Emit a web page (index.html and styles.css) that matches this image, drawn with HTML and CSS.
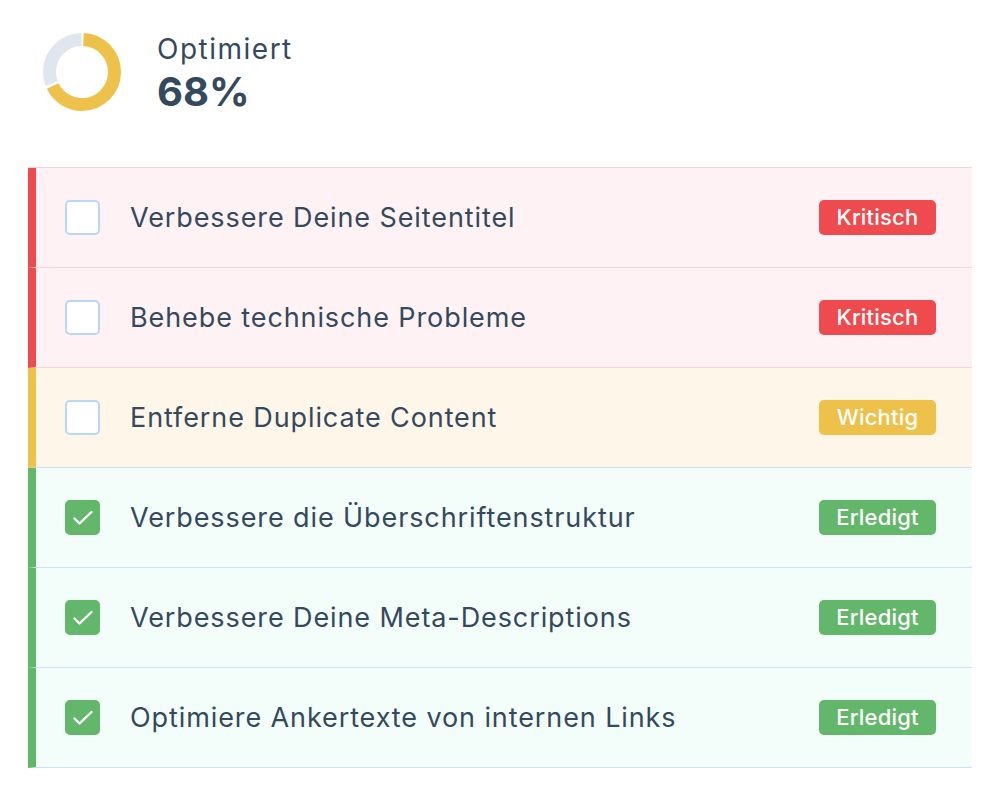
FILE: index.html
```html
<!DOCTYPE html>
<html lang="de">
<head>
<meta charset="utf-8">
<link rel="stylesheet" href="styles.css">
</head>
<body>
<div class="page">
  <header class="summary">
    <svg class="donut" width="78" height="78" viewBox="0 0 78 78">
      <circle cx="39" cy="39" r="32.5" fill="none" stroke="#dfe6ee" stroke-width="13"
        stroke-dasharray="62.3 141.9" stroke-dashoffset="-141" transform="rotate(-90 39 39)"/>
      <circle cx="39" cy="39" r="32.5" fill="none" stroke="#eec14a" stroke-width="13"
        stroke-dasharray="136.9 67.3" stroke-dashoffset="-1.5" transform="rotate(-90 39 39)"/>
    </svg>
    <div class="summary-text">
      <div class="summary-label">Optimiert</div>
      <div class="summary-value">68%</div>
    </div>
  </header>
  <ul class="tasks">
    <li class="task task-critical">
      <span class="check"></span>
      <span class="task-title">Verbessere Deine Seitentitel</span>
      <span class="badge badge-critical">Kritisch</span>
    </li>
    <li class="task task-critical">
      <span class="check"></span>
      <span class="task-title">Behebe technische Probleme</span>
      <span class="badge badge-critical">Kritisch</span>
    </li>
    <li class="task task-important">
      <span class="check"></span>
      <span class="task-title">Entferne Duplicate Content</span>
      <span class="badge badge-important">Wichtig</span>
    </li>
    <li class="task task-done">
      <span class="check check-on"><svg width="22" height="16" viewBox="0 0 22 16"><path d="M2.5 8.5l5 5L19.5 2" fill="none" stroke="#fff" stroke-width="2.4" stroke-linecap="round" stroke-linejoin="round"/></svg></span>
      <span class="task-title">Verbessere die Überschriftenstruktur</span>
      <span class="badge badge-done">Erledigt</span>
    </li>
    <li class="task task-done">
      <span class="check check-on"><svg width="22" height="16" viewBox="0 0 22 16"><path d="M2.5 8.5l5 5L19.5 2" fill="none" stroke="#fff" stroke-width="2.4" stroke-linecap="round" stroke-linejoin="round"/></svg></span>
      <span class="task-title">Verbessere Deine Meta-Descriptions</span>
      <span class="badge badge-done">Erledigt</span>
    </li>
    <li class="task task-done">
      <span class="check check-on"><svg width="22" height="16" viewBox="0 0 22 16"><path d="M2.5 8.5l5 5L19.5 2" fill="none" stroke="#fff" stroke-width="2.4" stroke-linecap="round" stroke-linejoin="round"/></svg></span>
      <span class="task-title">Optimiere Ankertexte von internen Links</span>
      <span class="badge badge-done">Erledigt</span>
    </li>
  </ul>
</div>
</body>
</html>
```

FILE: styles.css
```css
* { box-sizing: border-box; }
html, body { margin: 0; padding: 0; background: #fff; }
body {
  font-family: Inter, "Noto Sans", sans-serif;
  color: #34495e;
}
.page { padding: 32px 29px 0 28px; }
.summary {
  display: flex;
  align-items: flex-start;
  gap: 36px;
  padding-left: 15px;
}
.donut { display: block; flex: none; margin-top: 1px; }
.summary-text { display: flex; flex-direction: column; }
.summary-label { font-size: 28px; line-height: 34px; font-weight: 400; letter-spacing: 1.5px; color: #34495e; }
.summary-value { font-size: 40px; line-height: 48px; font-weight: 700; margin-top: 2px; color: #34495e; }

.tasks {
  list-style: none;
  margin: 51px 0 0 0;
  padding: 0;
  border-top: 1px solid #f6d4d8;
}
.task {
  display: flex;
  align-items: center;
  height: 100px;
  border-left: 8px solid;
  border-bottom: 1px solid;
  padding: 0 36px 0 29px;
}
.task-critical { background: #fff2f4; border-left-color: #ef4a4e; border-bottom-color: #f9d3d6; }
.task-important { background: #fff6ea; border-left-color: #eec14a; border-bottom-color: #c9e0ef; }
.task-done { background: #f3fdf9; border-left-color: #63b76b; border-bottom-color: #c8e3f4; }

.check {
  flex: none;
  width: 35px;
  height: 35px;
  border: 2px solid #b7d8f8;
  border-radius: 5px;
  background: #fff;
  display: flex;
  align-items: center;
  justify-content: center;
}
.check-on { background: #63b76b; border-color: #63b76b; }
.task-title {
  flex: 1;
  margin-left: 30px;
  font-size: 27px;
  line-height: 32px;
  letter-spacing: 0.9px;
  color: #34495e;
}
.badge {
  flex: none;
  height: 35px;
  line-height: 35px;
  padding: 0 14px;
  border-radius: 5px;
  color: #fff;
  font-size: 22px;
  font-weight: 500;
  letter-spacing: 0.2px;
  min-width: 117px;
  text-align: center;
}
.badge-critical { background: #ef4a4e; }
.badge-important { background: #eec14a; }
.badge-done { background: #63b76b; }
```
